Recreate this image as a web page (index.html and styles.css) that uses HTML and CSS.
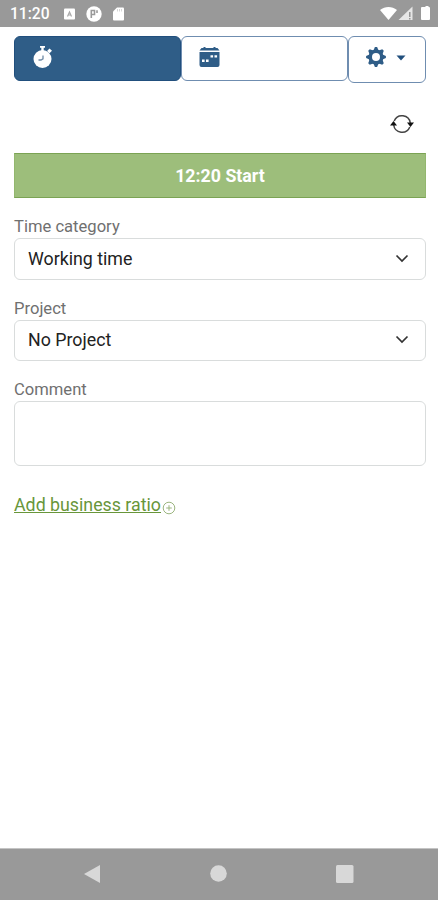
FILE: index.html
```html
<!DOCTYPE html>
<html lang="en">
<head>
    <meta charset="UTF-8">
    <meta name="viewport" content="width=device-width, initial-scale=1.0">
    <title>Time Tracking</title>
    <link rel="stylesheet" href="styles.css">
</head>
<body>
    <header class="status-bar">
        <span class="clock">11:20</span>
        <svg class="status-left" width="64" height="16" viewBox="0 0 64 16">
            <rect x="1" y="2.5" width="11" height="11" rx="1" fill="#fff"/>
            <path d="M4.500 10.500l2-4.500 2 4.500M5 9h3" fill="none" stroke="#aaa" stroke-width="1.200"/>
            <circle cx="31" cy="8" r="7.700" fill="#fff"/>
            <path d="M28.300 12V4.500h3.200v4h-2.800M34 4.300v2.700" fill="none" stroke="#999" stroke-width="1.600"/>
            <path d="M54 1.500h6a1 1 0 0 1 1 1v11a1 1 0 0 1-1 1h-9a1 1 0 0 1-1-1v-8z" fill="#fff"/>
            <path d="M54.500 3v2.500M56.500 3v2.500M58.500 3v2.500" stroke="#ccc" stroke-width=".8"/>
        </svg>
        <svg class="status-right" width="50" height="16" viewBox="0 0 50 16">
            <path d="M0 4C5 0 12 0 17 4L8.500 14z" fill="#fff"/>
            <path d="M32.500 .5v13.500H18.500z" fill="#e6e6e6"/>
            <path d="M29.800 6v5M29.800 12v1.500" stroke="#888" stroke-width="1.300"/>
            <path d="M42 1h3.500V0h3v1H49a1 1 0 0 1 1 1v11a1 1 0 0 1-1 1h-7a1 1 0 0 1-1-1V2a1 1 0 0 1 1-1z" fill="#fff"/>
        </svg>
    </header>

    <main class="container">
        <nav class="tabs">
            <button class="tab active" aria-label="Stopwatch">
                <svg width="20" height="22" viewBox="0 0 20 22">
                    <circle cx="9.500" cy="13" r="9" fill="#fff"/>
                    <path d="M7 0h5v1.800h-1.300V5H8.300V1.800H7zM14 5l2.500-2.500 2.500 2.200-2.500 2.500z" fill="#fff"/>
                    <path d="M10 9.500v3.300L8 14H5.500" fill="none" stroke="#6f8ba6" stroke-width="1.300"/>
                </svg>
            </button>
            <button class="tab" aria-label="Calendar">
                <svg width="21" height="20" viewBox="0 0 21 20">
                    <path d="M2.500 1h2V0h2v1h8V0h2v1h2l2 2.500H.5zM.5 5h20v13a2 2 0 0 1-2 2h-16a2 2 0 0 1-2-2z" fill="#2f5d87"/>
                    <path d="M11.500 8.200h2.600v2.400h-2.600zM15.500 8.200h2.600v2.400h-2.600zM3 12.500h2.600v2.400H3zM7 12.500h2.600v2.400H7z" fill="#fff"/>
                </svg>
            </button>
            <button class="tab settings" aria-label="Settings">
                <svg width="20" height="20" viewBox="-10 -10 20 20">
                    <g fill="#2f5d87">
                        <path id="tooth" d="M-2.600-6.500L-1.100-9.900H1.100L2.600-6.500V6.500L1.100 9.900H-1.100L-2.600 6.500z"/>
                        <use href="#tooth" transform="rotate(45)"/>
                        <use href="#tooth" transform="rotate(90)"/>
                        <use href="#tooth" transform="rotate(135)"/>
                        <circle r="7.500"/>
                    </g>
                    <circle r="4" fill="#fff"/>
                </svg>
                <svg width="10" height="6" viewBox="0 0 10 6"><path d="M.5.500h9L5 5.500z" fill="#214f7d"/></svg>
            </button>
        </nav>

        <div class="refresh">
            <svg width="24" height="20" viewBox="0 0 24 20">
                <path d="M4.200 7A8.400 8.400 0 0 1 20.300 9M19.800 13A8.400 8.400 0 0 1 3.700 11" fill="none" stroke="#444" stroke-width="1.500"/>
                <path d="M17 8.500h7L20.500 13zM0 11.500h7L3.500 7z" fill="#111"/>
            </svg>
        </div>

        <button class="start">12:20 Start</button>

        <label>Time category</label>
        <button class="select">
            <span>Working time</span>
            <svg width="14" height="9" viewBox="0 0 14 9"><path d="M1.500 1.500L7 7l5.500-5.500"/></svg>
        </button>

        <label>Project</label>
        <button class="select">
            <span>No Project</span>
            <svg width="14" height="9" viewBox="0 0 14 9"><path d="M1.500 1.500L7 7l5.500-5.500"/></svg>
        </button>

        <label for="comment">Comment</label>
        <textarea id="comment"></textarea>

        <div class="ratio">
            <a href="#">Add business ratio</a>
            <svg width="14" height="14" viewBox="0 0 14 14">
                <circle cx="7" cy="7" r="5.800"/>
                <path d="M7 4.200v5.600M4.200 7h5.600"/>
            </svg>
        </div>
    </main>

    <footer class="nav-bar">
        <svg width="16" height="18" viewBox="0 0 16 18"><path d="M0 9L16 0v18z"/></svg>
        <svg width="17" height="17" viewBox="0 0 17 17"><circle cx="8.500" cy="8.500" r="8.300"/></svg>
        <svg width="18" height="18" viewBox="0 0 18 18"><rect width="17.500" height="18" rx="1.500"/></svg>
    </footer>
</body>
</html>
```
FILE: styles.css
```css
* {
    box-sizing: border-box;
}

body {
    margin: 0;
    height: 900px;
    display: flex;
    flex-direction: column;
    background: #fff;
    font-family: Roboto, sans-serif;
    font-size: 17.8px;
    overflow: hidden;
}

svg {
    display: block;
    flex: none;
}

button {
    font: inherit;
    padding: 0;
    margin: 0;
}

.status-bar {
    height: 27px;
    background: #999;
    color: #fff;
    display: flex;
    align-items: center;
    padding: 1px 8px 0 10px;
}

.clock {
    width: 40px;
    font-size: 15.6px;
    font-weight: 500;
    line-height: 20px;
}

.status-left {
    margin-left: 13px;
}

.status-right {
    margin-left: auto;
}

.container {
    flex: 1;
    display: flex;
    flex-direction: column;
    padding: 9px 12px 0 14px;
}

.tabs {
    display: flex;
    align-items: flex-start;
    height: 47px;
}

.tab {
    width: 167px;
    height: 45px;
    padding-left: 17px;
    display: flex;
    align-items: center;
    background: #fff;
    border: 1px solid #6f8db0;
    border-radius: 6px;
}

.tab svg {
    margin-bottom: 3px;
}

.tab.active {
    padding-left: 18px;
    background: #2f5d87;
    border-color: #214f7d;
}

.tab.settings {
    width: 78px;
    height: 47px;
    gap: 10px;
    padding-left: 17px;
}

.tab.settings svg:first-child {
    margin-bottom: 6px;
}

.refresh {
    height: 70px;
    padding: 31px 12px 0 0;
    display: flex;
    justify-content: flex-end;
}

.start {
    height: 45px;
    background: #9dbe7b;
    border: 1px solid #7ba354;
    border-left-color: #93b76e;
    border-right-color: #93b76e;
    color: #fff;
    font-weight: 700;
}

label {
    height: 22px;
    margin-top: 18px;
    line-height: 22px;
    font-size: 16.6px;
    color: #707070;
}

.select {
    height: 41.5px;
    padding: 0 16px 1px 13px;
    display: flex;
    align-items: center;
    justify-content: space-between;
    background: #fff;
    border: 1.5px solid #d9dcdc;
    border-radius: 6px;
    color: #222;
}

.select path {
    fill: none;
    stroke: #333;
    stroke-width: 1.7;
}

textarea {
    height: 65px;
    border: 1.5px solid #d9dcdc;
    border-radius: 6px;
    resize: none;
}

.ratio {
    display: flex;
    align-items: center;
    gap: 1px;
    margin-top: 28px;
}

.ratio a {
    color: #68963a;
    line-height: 22px;
}

.ratio svg {
    margin-top: 5px;
    fill: none;
    stroke: #9bb57f;
}

.nav-bar {
    height: 52px;
    background: #999;
    border-top: 1px solid #c4c4c4;
    display: flex;
    align-items: center;
    padding: 0 84px 2px 84px;
    justify-content: space-between;
    fill: #d8d8d8;
}
```
